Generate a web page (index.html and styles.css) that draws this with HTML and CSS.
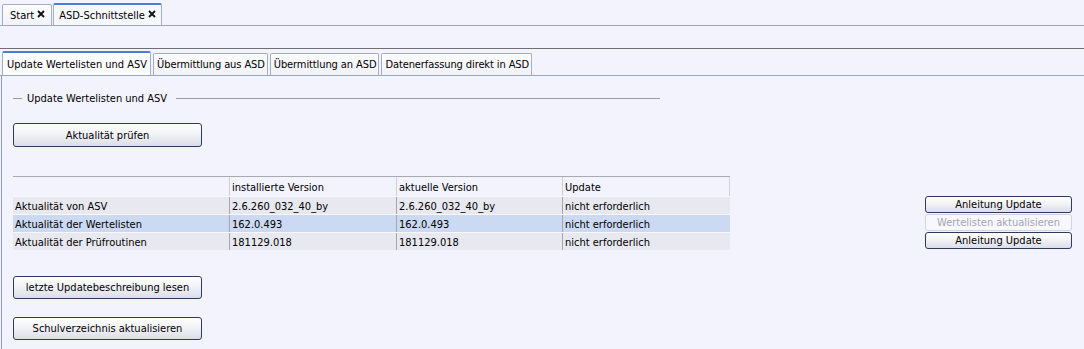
FILE: index.html
```html
<!DOCTYPE html>
<html lang="de">
<head>
<meta charset="utf-8">
<title>ASD-Schnittstelle</title>
<link rel="stylesheet" href="styles.css">
</head>
<body>
<div class="doc-tabs">
  <div class="doc-tab">Start <svg class="close" viewBox="0 0 8 8" width="8" height="8"><path d="M1 1L7 7M7 1L1 7"/></svg></div>
  <div class="doc-tab active">ASD-Schnittstelle <svg class="close" viewBox="0 0 8 8" width="8" height="8"><path d="M1 1L7 7M7 1L1 7"/></svg></div>
</div>
<div class="panel">
  <div class="sub-tabs">
    <div class="sub-tab active">Update Wertelisten und ASV</div>
    <div class="sub-tab">Übermittlung aus ASD</div>
    <div class="sub-tab">Übermittlung an ASD</div>
    <div class="sub-tab">Datenerfassung direkt in ASD</div>
  </div>
  <div class="content">
    <div class="legend">
      <span class="leg-line short"></span>
      <span class="leg-text">Update Wertelisten und ASV</span>
      <span class="leg-line long"></span>
    </div>
    <button class="btn btn-main first">Aktualität prüfen</button>
    <div class="table-row">
      <div class="grid">
        <div class="tr head">
          <div class="td c1"></div>
          <div class="td c2">installierte Version</div>
          <div class="td c3">aktuelle Version</div>
          <div class="td c4">Update</div>
        </div>
        <div class="tr">
          <div class="td c1">Aktualität von ASV</div>
          <div class="td c2">2.6.260_032_40_by</div>
          <div class="td c3">2.6.260_032_40_by</div>
          <div class="td c4">nicht erforderlich</div>
        </div>
        <div class="tr selected">
          <div class="td c1">Aktualität der Wertelisten</div>
          <div class="td c2">162.0.493</div>
          <div class="td c3">162.0.493</div>
          <div class="td c4">nicht erforderlich</div>
        </div>
        <div class="tr">
          <div class="td c1">Aktualität der Prüfroutinen</div>
          <div class="td c2">181129.018</div>
          <div class="td c3">181129.018</div>
          <div class="td c4">nicht erforderlich</div>
        </div>
      </div>
      <div class="side">
        <button class="btn btn-side">Anleitung Update</button>
        <button class="btn btn-side disabled" disabled>Wertelisten aktualisieren</button>
        <button class="btn btn-side">Anleitung Update</button>
      </div>
    </div>
    <button class="btn btn-main second">letzte Updatebeschreibung lesen</button>
    <button class="btn btn-main third">Schulverzeichnis aktualisieren</button>
  </div>
</div>
</body>
</html>
```
FILE: styles.css
```css
html, body {
  margin: 0;
  padding: 0;
}
body {
  background: #f3f3fd;
  font-family: "DejaVu Sans Condensed", "DejaVu Sans", sans-serif;
  font-stretch: condensed;
  font-size: 11px;
  color: #000;
  width: 1084px;
  height: 349px;
  overflow: hidden;
}

/* document tabs */
.doc-tabs {
  height: 25px;
  border-bottom: 1px solid #9ca6bd;
  display: flex;
  align-items: flex-end;
  padding-left: 2px;
  gap: 1px;
}
.doc-tab {
  height: 21px;
  box-sizing: border-box;
  border: 1px solid #a3adc3;
  border-bottom: none;
  border-radius: 2px 2px 0 0;
  background: linear-gradient(#fdfdff, #f1f2f8);
  padding: 1px 6px 0 7px;
  display: flex;
  align-items: center;
  gap: 3px;
  font-size: 11px;
}
.doc-tab.active {
  height: 22px;
  border-top: 2px solid #4a7fd8;
  background: #f7f7fe;
  padding: 0 5px 0 5px;
}
.close {
  stroke: #111;
  stroke-width: 1.8;
  fill: none;
  margin-top: -3px;
}

/* inner panel */
.panel {
  margin-top: 22px;
  border-top: 1px solid #6f6f6f;
}
.sub-tabs {
  height: 26px;
  border-bottom: 1px solid #9ca6bd;
  display: flex;
  align-items: flex-end;
  padding-left: 2px;
  gap: 2px;
}
.sub-tab {
  height: 22px;
  box-sizing: border-box;
  border: 1px solid #a3adc3;
  border-bottom: none;
  border-radius: 2px 2px 0 0;
  background: linear-gradient(#fdfdff, #f1f2f8);
  padding: 0 2px 0 3px;
  display: flex;
  align-items: center;
  letter-spacing: -0.1px;
}
.sub-tab.active {
  height: 24px;
  border-top: 2px solid #4a7fd8;
  background: #fdfdff;
  padding: 0 3px 0 4px;
  letter-spacing: 0;
}

.content {
  margin-left: 1px;
  border-left: 1px solid #8f9bb8;
  padding: 15px 12px 0 11px;
  height: 273px;
  box-sizing: border-box;
}

.legend {
  width: 647px;
  height: 14px;
  display: flex;
  align-items: center;
}
.leg-line {
  height: 1px;
  background: #9a9aa4;
}
.leg-line.short {
  width: 9px;
  margin-right: 5px;
}
.leg-line.long {
  flex: 1;
  margin-left: 9px;
}

/* buttons */
.btn {
  display: block;
  font-family: inherit;
  font-stretch: condensed;
  font-size: 11px;
  color: #000;
  border: 1px solid #2e3b5e;
  border-radius: 3px;
  background: linear-gradient(#ffffff, #f2f2f7 45%, #dcdde7);
  padding: 0;
  margin: 0;
}
.btn-main {
  width: 189px;
  height: 23px;
}
.btn-main.first {
  margin-top: 18px;
  height: 24px;
}
.btn-main.second {
  margin-top: 26px;
}
.btn-main.third {
  margin-top: 18px;
}

/* table */
.table-row {
  margin-top: 29px;
  display: flex;
  justify-content: space-between;
}
.grid {
  width: 717px;
  border-top: 1px solid #a9a9b4;
}
.tr {
  display: grid;
  grid-template-columns: 216px 167px 166px 168px;
  height: 18px;
  background: #e8e8f0;
  border-top: 1px solid #f7f7fc;
  box-sizing: border-box;
}
.tr.head {
  height: 19px;
  background: #f3f3fd;
  border-top: none;
}
.tr.selected {
  background: #cbd9f2;
}
.td {
  padding: 2px 0 0 2px;
  line-height: 15px;
  white-space: nowrap;
  overflow: hidden;
}
.tr .c2, .tr .c3, .tr .c4 {
  border-left: 1px solid #a6a6b0;
}
.tr.head .td {
  padding-top: 3px;
  line-height: 16px;
}
.tr.head .c2, .tr.head .c3, .tr.head .c4 {
  border-left: 1px solid #cfd0da;
}
.tr.head .c4 {
  border-right: 1px solid #cfd0da;
}

.side {
  width: 147px;
  margin-top: 20px;
  display: flex;
  flex-direction: column;
  gap: 1px;
}
.btn-side {
  width: 147px;
  height: 17px;
  line-height: 14px;
}
.btn-side.disabled {
  border-color: #d2d4de;
  color: #a4a6b0;
  background: #f7f7fd;
}
```
